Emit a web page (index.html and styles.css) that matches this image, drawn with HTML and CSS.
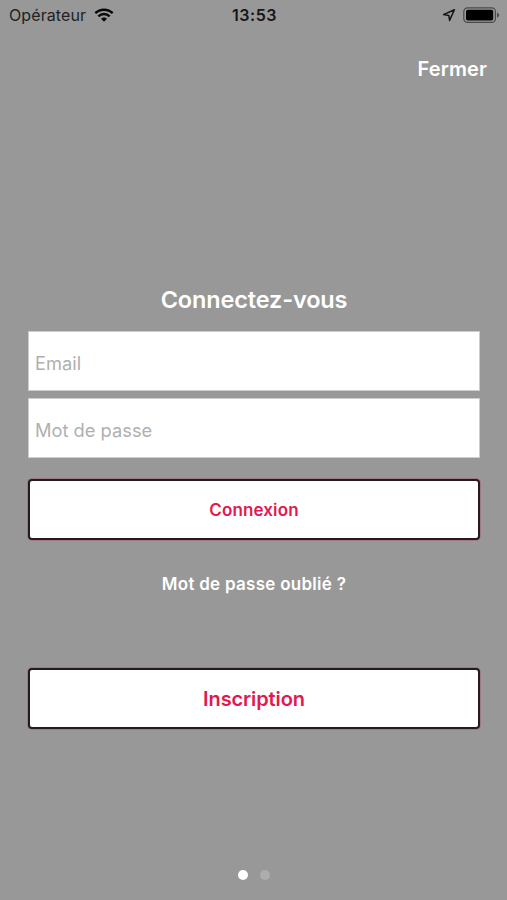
FILE: index.html
```html
<!DOCTYPE html>
<html lang="fr">
<head>
<meta charset="utf-8">
<title>Connexion</title>
<link rel="stylesheet" href="styles.css">
</head>
<body>
<div class="screen">
  <header class="status">
    <div class="carrier">
      <span>Opérateur</span>
      <svg class="wifi" width="20" height="14" viewBox="0 0 20 14" fill="none" stroke="#080808" stroke-width="2.4">
        <path d="M1.3 5.2C6 .5 14 .5 18.7 5.2"/>
        <path d="M4.4 8.3c3.1-3 8.1-3 11.2 0"/>
        <path d="M7 10.7c1.7-1.5 4.3-1.5 6 0l-3 3z" fill="#080808" stroke="none"/>
      </svg>
    </div>
    <time class="clock">13:53</time>
    <div class="indicators">
      <svg width="14" height="14" viewBox="0 0 14 14" fill="none" stroke="#151515" stroke-width="1.5" stroke-linejoin="round">
        <path d="M12.4 1.8 1.6 6.6l5.2.8.8 5z"/>
      </svg>
      <svg width="37" height="17" viewBox="0 0 37 17">
        <rect x=".8" y=".8" width="31.6" height="14.6" rx="3.7" fill="none" stroke="#4a4a4a" stroke-width="1.2"/>
        <rect x="3" y="2.8" width="27.2" height="10.6" rx="1.7" fill="#000"/>
        <path d="M34 5.5q2.2 1 2.2 2.6T34 10.7z" fill="#4a4a4a"/>
      </svg>
    </div>
  </header>
  <nav class="topbar"><button class="close" type="button">Fermer</button></nav>
  <main class="content">
    <h1 class="title">Connectez-vous</h1>
    <form class="form">
      <input class="field" type="email" placeholder="Email" aria-label="Email">
      <input class="field" type="password" placeholder="Mot de passe" aria-label="Mot de passe">
      <button class="button" type="button">Connexion</button>
    </form>
    <a class="forgot">Mot de passe oublié ?</a>
    <button class="button signup" type="button">Inscription</button>
  </main>
  <footer class="pager"><span class="dot active"></span><span class="dot"></span></footer>
</div>
</body>
</html>
```
FILE: styles.css
```css
* { box-sizing: border-box; }
body {
  margin: 0;
  background: #989898;
  font-family: Inter, "Liberation Sans", sans-serif;
}
button, input { font-family: inherit; }
.screen {
  display: flex;
  flex-direction: column;
  height: 900px;
  overflow: hidden;
}
.status {
  display: grid;
  grid-template-columns: 1fr auto 1fr;
  align-items: center;
  height: 30px;
  padding: 0 7px 0 9px;
  color: #222;
}
.carrier {
  display: flex;
  align-items: center;
  gap: 8px;
  font-size: 16px;
  line-height: 20px;
  letter-spacing: .1px;
}
.clock {
  font-size: 16px;
  font-weight: 600;
  letter-spacing: .5px;
  color: #151515;
}
.indicators {
  display: flex;
  justify-content: flex-end;
  align-items: center;
  gap: 7px;
}
.topbar {
  display: flex;
  justify-content: flex-end;
  padding: 27px 20px 0;
}
.close {
  border: 0;
  padding: 0;
  background: none;
  color: #fff;
  font-size: 20px;
  font-weight: 600;
  line-height: 24px;
  letter-spacing: .1px;
}
.content {
  display: flex;
  flex-direction: column;
  padding: 204px 27px 0 28px;
}
.title {
  margin: 0;
  color: #fff;
  font-size: 23.5px;
  font-weight: 600;
  line-height: 30px;
  letter-spacing: -.15px;
  text-align: center;
}
.form {
  display: flex;
  flex-direction: column;
  padding-top: 16px;
}
.field {
  height: 60px;
  margin-bottom: 7px;
  padding: 4px 6px 0;
  border: 1px solid #ccc;
  border-radius: 0;
  background: #fff;
  font-size: 18.3px;
}
.field::placeholder { color: #b0b0b0; opacity: 1; }
.button {
  height: 61px;
  padding: 0;
  border: 2px solid #241a20;
  border-radius: 4px;
  background: #fff;
  box-shadow: 0 0 0 1px #a07882;
  color: #e31850;
  font-size: 17px;
  font-weight: 600;
  letter-spacing: .12px;
}
.form .button { margin-top: 14px; }
.forgot {
  margin-top: 32px;
  color: #fff;
  font-size: 17px;
  font-weight: 600;
  line-height: 24px;
  letter-spacing: .27px;
  text-align: center;
}
.signup {
  margin-top: 72px;
  font-size: 20px;
  letter-spacing: -.1px;
}
.pager {
  display: flex;
  justify-content: center;
  gap: 12px;
  margin-top: auto;
  padding-bottom: 20px;
}
.dot {
  width: 10px;
  height: 10px;
  border-radius: 50%;
  background: #adadad;
}
.dot.active { background: #fff; }
```
